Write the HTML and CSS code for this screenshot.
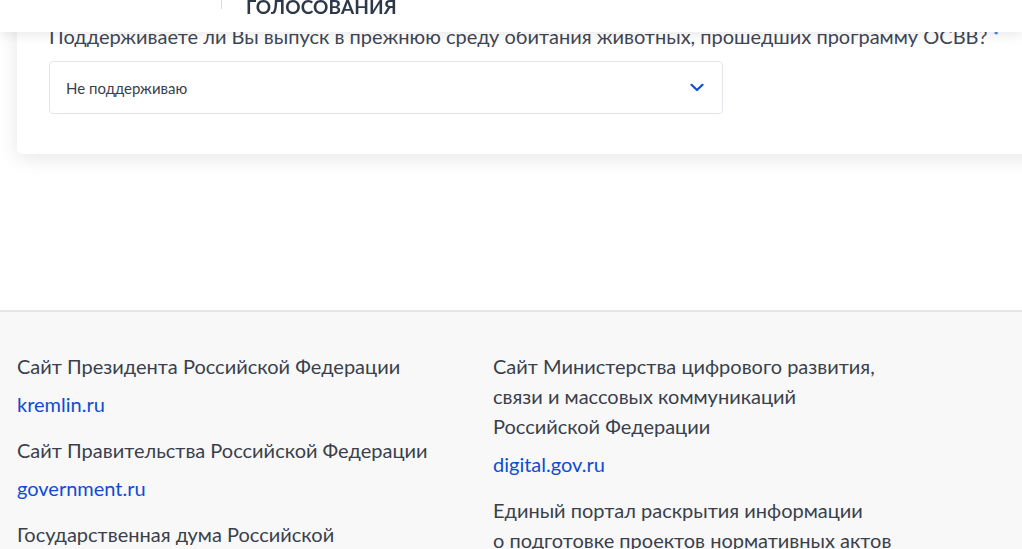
FILE: index.html
```html
<!DOCTYPE html>
<html lang="ru">
<head>
<meta charset="utf-8">
<title>Голосование</title>
<link rel="stylesheet" href="styles.css">
</head>
<body>
<header class="topbar">
  <div class="topbar-inner">
    <span class="divider"></span>
    <span class="topbar-title">Голосования</span>
  </div>
</header>
<main class="main">
  <section class="card">
    <p class="question">Поддерживаете ли Вы выпуск в прежнюю среду обитания животных, прошедших программу ОСВВ?<span class="req">*</span></p>
    <div class="select">
      <span class="select-value">Не поддерживаю</span>
      <svg class="chevron" width="14" height="9" viewBox="0 0 14 9" aria-hidden="true"><path d="M1.5 1.8 L7 7 L12.5 1.8" fill="none" stroke="#0d4cd3" stroke-width="2.2" stroke-linecap="round" stroke-linejoin="round"/></svg>
    </div>
  </section>
</main>
<footer class="footer">
  <div class="footer-grid">
    <div class="col">
      <p class="f-title">Сайт Президента Российской Федерации</p>
      <a class="f-link" href="#">kremlin.ru</a>
      <p class="f-title">Сайт Правительства Российской Федерации</p>
      <a class="f-link" href="#">government.ru</a>
      <p class="f-title">Государственная дума Российской<br>Федерации</p>
    </div>
    <div class="col">
      <p class="f-title">Сайт Министерства цифрового развития,<br>связи и массовых коммуникаций<br>Российской Федерации</p>
      <a class="f-link" href="#">digital.gov.ru</a>
      <p class="f-title">Единый портал раскрытия информации<br>о подготовке проектов нормативных актов</p>
    </div>
  </div>
</footer>
</body>
</html>
```
FILE: styles.css
```css
html, body {
  margin: 0;
  padding: 0;
}
body {
  font-family: Lato, "Open Sans", "Liberation Sans", sans-serif;
  color: #3a3f4b;
  background: #fff;
  overflow-x: hidden;
}
.topbar {
  position: fixed;
  top: 0;
  left: 0;
  right: 0;
  height: 32px;
  background: #fff;
  box-shadow: 0 4px 12px rgba(0, 0, 0, 0.08);
  z-index: 10;
  overflow: hidden;
}
.topbar-inner {
  display: flex;
  align-items: flex-end;
  height: 17px;
  padding-left: 221px;
}
.divider {
  width: 1px;
  height: 9px;
  background: #d8dde3;
  align-self: flex-start;
}
.topbar-title {
  margin-left: 24px;
  font-family: Lato, "Liberation Sans", sans-serif;
  font-weight: 700;
  font-size: 19px;
  line-height: 20px;
  text-transform: uppercase;
  color: #2d3949;
  letter-spacing: 0.1px;
}
.main {
  padding: 0 0 0 17px;
}
.card {
  background: #fff;
  border-radius: 0 0 0 5px;
  box-shadow: 0 4px 20px rgba(0, 0, 0, 0.1);
  padding: 24px 0 40px 32px;
  margin-right: -40px;
}
.question {
  margin: 0;
  font-size: 20px;
  line-height: 24px;
  color: #3f4654;
  white-space: nowrap;
}
.req {
  color: #0d4cd3;
  font-size: 12px;
  vertical-align: top;
  margin-left: 6px;
}
.select {
  margin-top: 13px;
  width: 674px;
  height: 53px;
  box-sizing: border-box;
  border: 1px solid #e2e6ec;
  border-radius: 4px;
  display: flex;
  align-items: center;
  justify-content: space-between;
  padding: 0 18px 0 16px;
}
.select-value {
  font-size: 15px;
  color: #3a3f4b;
}
.chevron {
  display: block;
}
.footer {
  margin-top: 156px;
  border-top: 2px solid #e3e7ec;
  background: #f8f8f9;
  padding: 39px 0 20px 17px;
}
.footer-grid {
  display: grid;
  grid-template-columns: 476px 1fr;
}
.col {
  display: flex;
  flex-direction: column;
  align-items: flex-start;
}
.f-title {
  margin: 0 0 8px;
  font-size: 20px;
  line-height: 30px;
  color: #3a3f4b;
}
.f-link {
  font-size: 20px;
  line-height: 30px;
  color: #0d4cd3;
  text-decoration: none;
  margin-bottom: 16px;
}
```
